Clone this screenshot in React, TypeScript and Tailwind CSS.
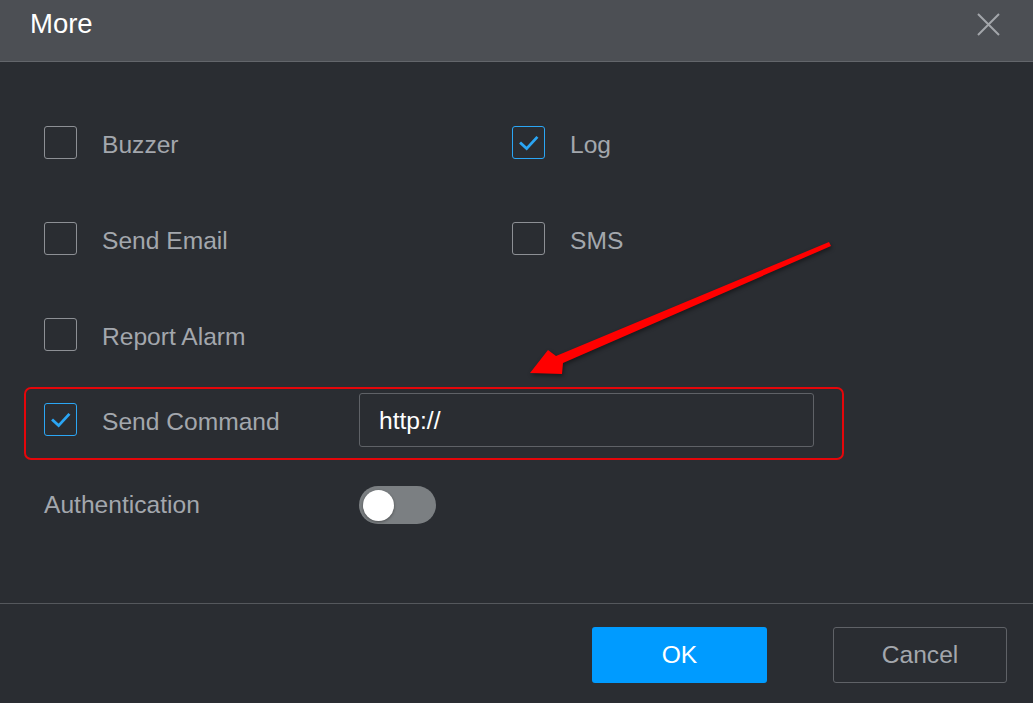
import React, { useState } from "react";

const font = { fontFamily: '"Liberation Sans", Arial, sans-serif' };

interface CheckProps {
  label: string;
  checked?: boolean;
  labelWidth?: string;
}

const CheckItem: React.FC<CheckProps> = ({ label, checked = false, labelWidth }) => {
  const [on, setOn] = useState(checked);
  return (
    <label className="flex items-center cursor-pointer select-none">
      <span
        onClick={() => setOn(!on)}
        className={`flex h-[33px] w-[33px] shrink-0 items-center justify-center rounded-[3px] border ${
          on ? "border-[#2ba6f5]" : "border-[#8d9095]"
        }`}
      >
        {on && (
          <svg width="33" height="33" viewBox="0 0 33 33" fill="none">
            <path
              d="M7.5 16.5 L14.5 23 L26 10.5"
              stroke="#2ba6f5"
              strokeWidth="3"
              strokeLinecap="butt"
              strokeLinejoin="miter"
            />
          </svg>
        )}
      </span>
      <span className={`ml-[25px] translate-y-[2px] text-[24.6px] text-[#a3a7ad] ${labelWidth ?? ""}`}>{label}</span>
    </label>
  );
};

const Toggle: React.FC = () => {
  const [on, setOn] = useState(false);
  return (
    <button
      onClick={() => setOn(!on)}
      className={`relative h-[38px] w-[77px] rounded-full ${on ? "bg-[#009bff]" : "bg-[#7b7f82]"}`}
    >
      <span
        className={`absolute top-[3.5px] h-[31px] w-[31px] rounded-full bg-white shadow-[0_1px_3px_rgba(0,0,0,0.4)] ${
          on ? "left-[42px]" : "left-[4px]"
        }`}
      />
    </button>
  );
};

export default function App() {
  return (
    <div className="relative flex h-[703px] w-[1033px] flex-col overflow-hidden bg-[#2a2d32]" style={font}>
      {/* title bar */}
      <div className="flex h-[62px] shrink-0 items-start justify-between border-b border-[#63666b] bg-[#4c4f54] pl-[30px] pr-[33px] pt-[9px]">
        <h1 className="text-[27.5px] leading-[30px] text-white">More</h1>
        <button className="mt-[4px] text-[#a3a6aa]" aria-label="Close">
          <svg width="23" height="23" viewBox="0 0 23 23" fill="none">
            <path d="M1 1 L22 22 M22 1 L1 22" stroke="currentColor" strokeWidth="2" />
          </svg>
        </button>
      </div>

      {/* options */}
      <div className="flex flex-1 flex-col pl-[44px] pt-[33px]">
        <div className="grid grid-cols-[468px_1fr] auto-rows-[96px] items-center">
          <CheckItem label="Buzzer" />
          <CheckItem label="Log" checked />
          <CheckItem label="Send Email" />
          <CheckItem label="SMS" />
          <CheckItem label="Report Alarm" />
          <div />
        </div>

        <div className="relative mt-[10px] flex h-[54px] items-center">
          <div className="pointer-events-none absolute -left-[20px] -top-[6px] h-[73px] w-[820px] rounded-[7px] border-2 border-[#e4060a]" />
          <CheckItem label="Send Command" checked labelWidth="w-[257px]" />
          <input
            defaultValue="http://"
            className="h-[54px] w-[455px] rounded-[3px] border border-[#5f6267] bg-transparent px-[19px] pt-[2px] text-[24.6px] text-white outline-none"
            style={font}
          />
        </div>

        <div className="mt-[39px] flex h-[38px] items-center">
          <span className="w-[315px] text-[24.6px] text-[#a3a7ad]">Authentication</span>
          <Toggle />
        </div>
      </div>

      {/* footer */}
      <div className="flex h-[100px] shrink-0 items-start justify-end gap-[66px] border-t border-[#55585d] pr-[26px] pt-[23px]">
        <button className="h-[56px] w-[175px] rounded-[3px] bg-[#009bff] text-[24.6px] text-white">OK</button>
        <button className="h-[56px] w-[174px] rounded-[3px] border border-[#5f6267] text-[24.6px] text-[#a3a7ad]">
          Cancel
        </button>
      </div>

      {/* red pointer arrow */}
      <svg
        className="pointer-events-none absolute inset-0"
        width="1033"
        height="703"
        viewBox="0 0 1033 703"
        style={{ filter: "drop-shadow(1px 2px 2px rgba(0,0,0,0.45))" }}
      >
        <polygon
          points="829,242 556,356 548,350 530,373 562,374 563,363 831,246"
          fill="#ff0000"
        />
      </svg>
    </div>
  );
}
